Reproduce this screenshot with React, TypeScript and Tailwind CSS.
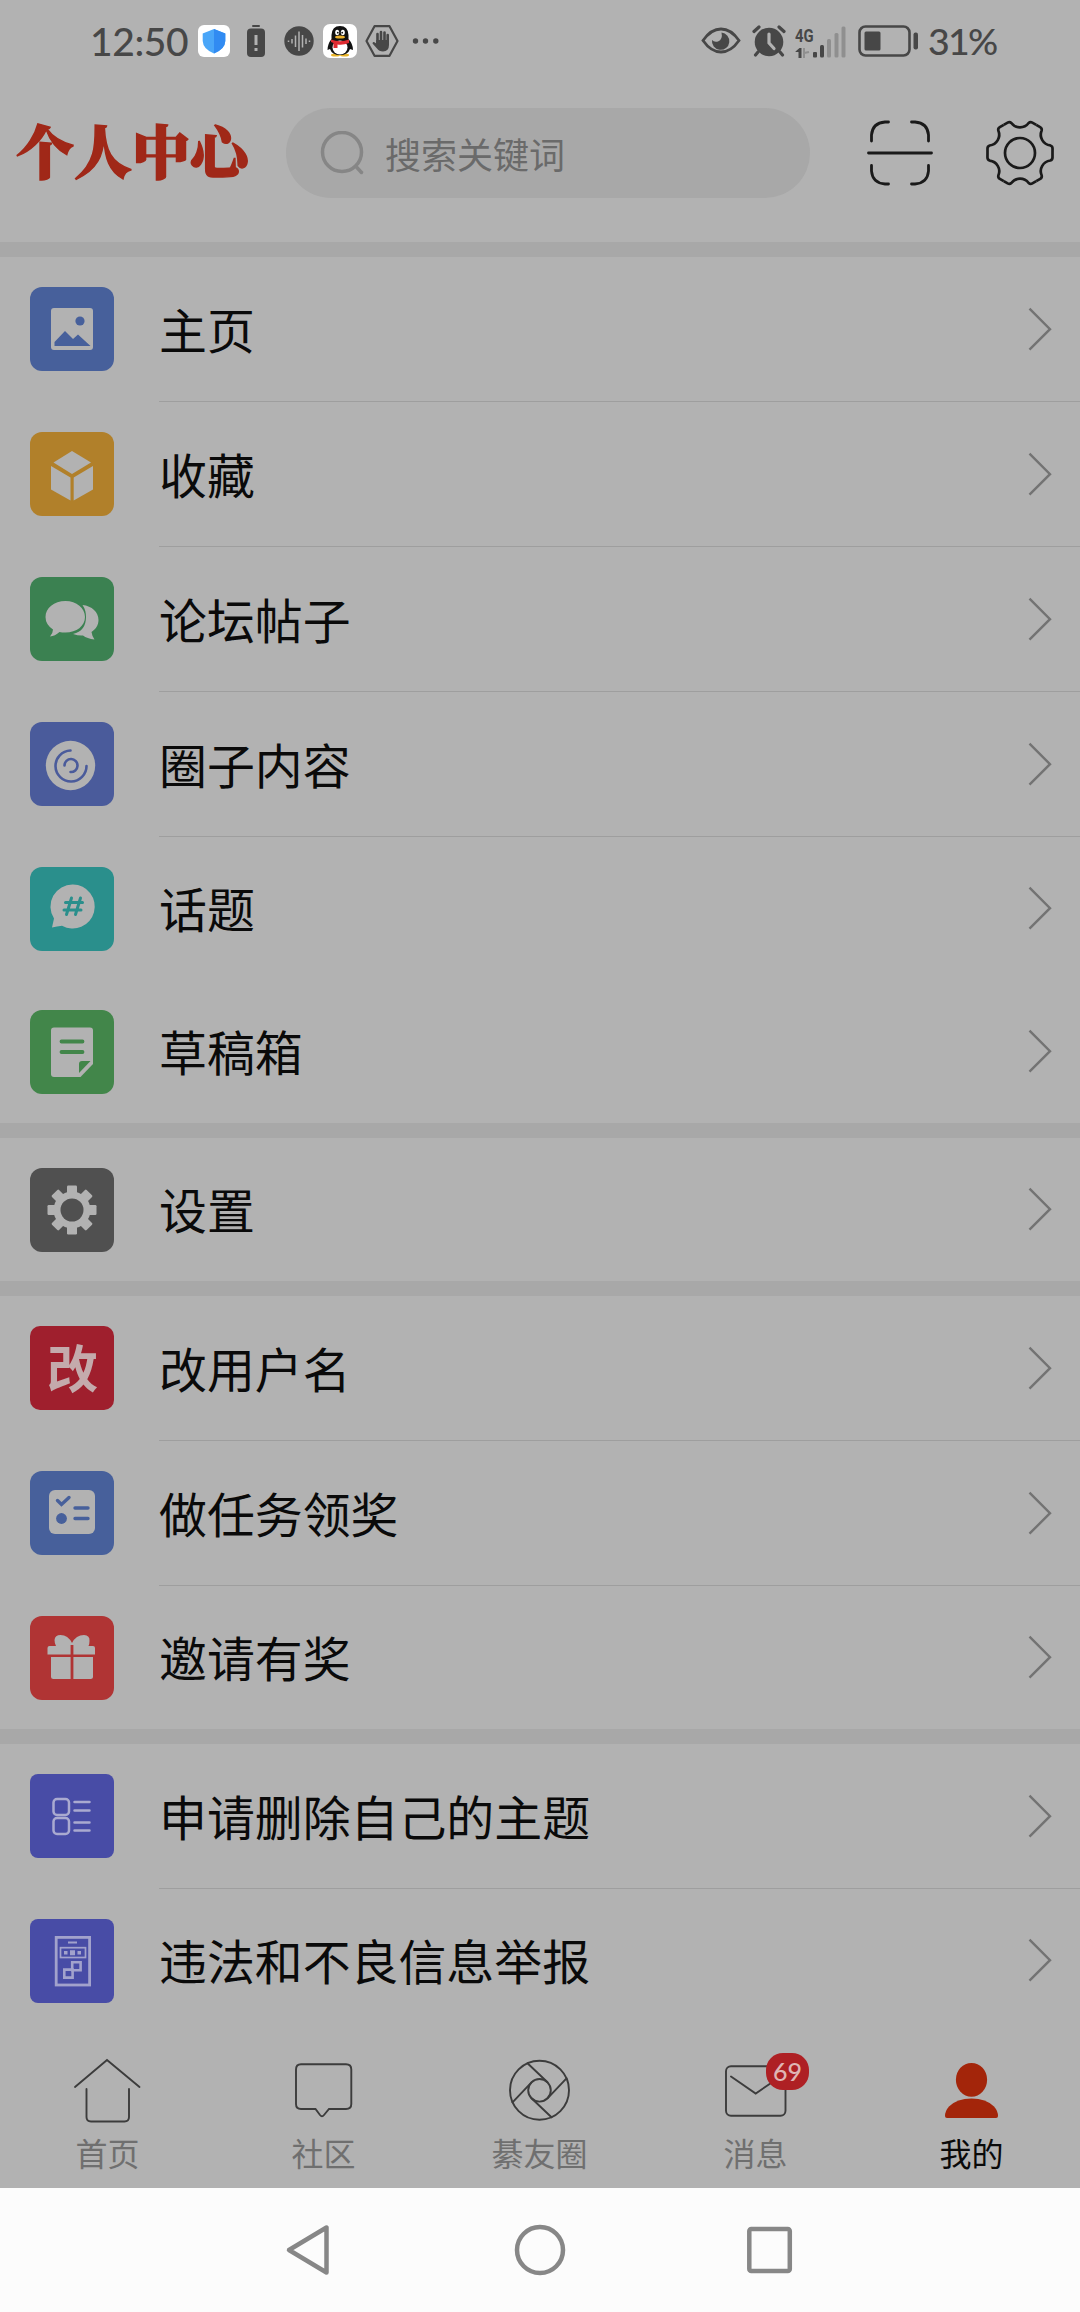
import type { ReactNode } from "react";
import { clsx } from "clsx";

interface MenuItem {
  label: string;
  color: string;
  icon: ReactNode;
  line?: boolean;
}

// Glyphs are drawn on an 84x84 tile
const groups: MenuItem[][] = [
  [
    {
      label: "主页",
      color: "bg-[#47609b] rounded-xl",
      line: true,
      icon: (
        <>
          <rect x="21" y="21" width="42" height="42" rx="3" fill="#b2b2b2" />
          <circle cx="50" cy="34" r="4.6" fill="#47609b" />
          <path d="M24.500 59V55L35 44L43 52L48 47.500L60.500 59Z" fill="#47609b" />
        </>
      ),
    },
    {
      label: "收藏",
      color: "bg-[#b1802a] rounded-xl",
      line: true,
      icon: (
        <g fill="#b2b2b2">
          <path d="M42 19L61 30.500L42 42L23.500 30.500Z" />
          <path d="M21 34L40.500 45.500V68.500L21 57.500Z" />
          <path d="M63 34L43.700 45.500V68.500L63 57.500Z" />
        </g>
      ),
    },
    {
      label: "论坛帖子",
      color: "bg-[#3b8151] rounded-xl",
      line: true,
      icon: (
        <g fill="#b2b2b2">
          <path d="M52.500 28C62 29 68.500 35 68.500 43C68.500 48 66 52 61.500 55Q62 59 64.500 62.500Q57 61.500 53 58.500Q49 59 43 57Q56 54 56 40Q56 33 52.500 28Z" />
          <path d="M35.500 24C46.500 24 55 31 55 40C55 49 46.500 55.500 35.500 55.500Q32 55.500 29.500 55Q25 59 20 59.500Q23 56 23 52.500Q15.500 47.500 15.500 40C15.500 31 24 24 35.500 24Z" />
        </g>
      ),
    },
    {
      label: "圈子内容",
      color: "bg-[#4a5b9b] rounded-xl",
      line: true,
      icon: (
        <>
          <circle cx="40.500" cy="43.500" r="24.700" fill="#b2b2b2" />
          <path
            d="M40.500 28.500A15.500 15.500 0 1 0 56.500 44M34.500 43.500A6.500 6.500 0 1 1 40.500 50"
            fill="none"
            stroke="#4a5b9b"
            strokeWidth="2.600"
            strokeLinecap="round"
          />
        </>
      ),
    },
    {
      label: "话题",
      color: "bg-[#2a8f8c] rounded-xl",
      icon: (
        <>
          <path
            d="M43 17.500A22 22 0 1 1 32 58.700Q27 59.500 22 60.500L24 51.500A22 22 0 0 1 43 17.500Z"
            fill="#b2b2b2"
          />
          <path
            d="M41.500 31L36.500 47.500M50.500 31L45.500 47.500M35.500 35.500H52.500M34 43H51"
            fill="none"
            stroke="#2a8f8c"
            strokeWidth="3"
            strokeLinecap="round"
          />
        </>
      ),
    },
    {
      label: "草稿箱",
      color: "bg-[#42864a] rounded-xl",
      icon: (
        <>
          <path
            d="M24 17.500H60Q63 17.500 63 20.500V54L50.500 67H24Q21 67 21 64V20.500Q21 17.500 24 17.500Z"
            fill="#b2b2b2"
          />
          <path d="M31.500 31.500H52.500M31.500 42H52.500" stroke="#42864a" strokeWidth="3.800" strokeLinecap="round" />
          <path d="M49 63V54Q49 51 52 51H60.500Z" fill="#42864a" />
        </>
      ),
    },
  ],
  [
    {
      label: "设置",
      color: "bg-[#505050] rounded-xl",
      icon: (
        <g transform="translate(42 42)">
          {[0, 45, 90, 135].map((a) => (
            <rect
              key={a}
              x="-5"
              y="-24.500"
              width="10"
              height="49"
              rx="1.200"
              fill="#b2b2b2"
              transform={`rotate(${a})`}
            />
          ))}
          <circle r="18.500" fill="#b2b2b2" />
          <circle r="11.500" fill="#505050" />
        </g>
      ),
    },
  ],
  [
    {
      label: "改用户名",
      color: "bg-[#9f1f2d] rounded-[10px]",
      line: true,
      icon: (
        <text x="42.500" y="62" textAnchor="middle" fontSize="51" fontWeight="700" fill="#c4aaac">
          改
        </text>
      ),
    },
    {
      label: "做任务领奖",
      color: "bg-[#47609b] rounded-xl",
      line: true,
      icon: (
        <>
          <rect x="19" y="19" width="46" height="44" rx="6" fill="#b2b2b2" />
          <path
            d="M27.500 29.500L31.500 33.500L39 26.500M45 37H58M45 47.500H58"
            fill="none"
            stroke="#47609b"
            strokeWidth="3.400"
            strokeLinecap="round"
          />
          <circle cx="31.500" cy="47.500" r="5.400" fill="#47609b" />
        </>
      ),
    },
    {
      label: "邀请有奖",
      color: "bg-[#b03434] rounded-xl",
      icon: (
        <g fill="#b2b2b2">
          <path d="M42 27Q46 19 54 19Q60 19.500 59.500 25Q59.500 28 58.500 30H63Q65 30 65 32V38.500H43.400V29H40.600V38.500H17.500V32Q17.500 30 19.500 30H26Q24.500 27 24.500 24Q25 19 30.500 19Q38 19 42 27Z" />
          <path d="M21 41H40.600V63H23.500Q21 63 21 60.500Z" />
          <path d="M43.400 41H63V60.500Q63 63 60.500 63H43.400Z" />
        </g>
      ),
    },
  ],
  [
    {
      label: "申请删除自己的主题",
      color: "bg-[#484ca6] rounded-lg",
      line: true,
      icon: (
        <g fill="none" stroke="#aaaad0" strokeWidth="2.500" strokeLinecap="round">
          <rect x="23.500" y="25" width="15.500" height="16" rx="3.500" />
          <rect x="23.500" y="44" width="15.500" height="16" rx="3.500" />
          <path d="M44.500 28H59.500M44.500 36.500H59.500M44.500 48.500H59.500M44.500 56.500H59.500" />
        </g>
      ),
    },
    {
      label: "违法和不良信息举报",
      color: "bg-[#484ca6] rounded-lg",
      icon: (
        <g fill="none" stroke="#a2a2cc" strokeWidth="2.800">
          <rect x="26.200" y="18.400" width="33.400" height="47.600" />
          <path d="M38 23.500H47" strokeWidth="2.200" />
          <rect x="30.500" y="28.700" width="25" height="9.800" strokeWidth="1.700" />
          <path d="M34 33.700H37.500M47.500 33.700H51" strokeWidth="3.500" />
          <path d="M40 33.700H45" strokeWidth="5" />
          <path d="M42.200 43.300H50.600V51.200H42.200ZM34.300 50.600H42.600V58.600H34.300Z" strokeWidth="2.600" />
        </g>
      ),
    },
  ],
];

function MenuRow({ item }: { item: MenuItem }) {
  return (
    <div className={clsx("flex", item.line ? "h-[145px]" : "h-[143px]")}>
      <div className={clsx("mt-[30px] ml-[30px] size-[84px] shrink-0 overflow-hidden", item.color)}>
        <svg viewBox="0 0 84 84" className="size-full">
          {item.icon}
        </svg>
      </div>
      <div
        className={clsx(
          "ml-[45px] flex flex-1 items-center justify-between pr-7 pb-[1px]",
          item.line && "border-b border-[#9e9e9e]"
        )}
      >
        <span className="-mt-[2px] text-[47.900px] leading-[60px] text-[#0a0a0a]">{item.label}</span>
        <svg viewBox="0 0 24 44" className="h-[44px] w-[24px]" fill="none" stroke="#737373" strokeWidth="2.400">
          <path d="M1.500 1.700L22 22.200L1.500 42.700" />
        </svg>
      </div>
    </div>
  );
}

function StatusBar() {
  return (
    <div className="flex h-20 items-center pt-[2px] text-[#474747]">
      <span className="ml-[90px] w-[100px] font-[Lato] text-[39px] leading-none font-medium tracking-[-0.4px]">
        12:50
      </span>
      <svg viewBox="0 0 32 32" className="ml-2 size-8">
        <rect width="32" height="32" rx="6" fill="#fff" />
        <path d="M16 4L27.300 8.500V16Q27 24 16 28.500Q5 24 4.700 16V8.500Z" fill="#4aa6f8" />
        <path d="M16 4L27.300 8.500V16Q27 24 16 28.500Z" fill="#318bf2" />
      </svg>
      <svg viewBox="0 0 18 32" className="ml-[17px] h-8 w-[18px]" fill="currentColor">
        <rect x="5" y="0" width="8" height="2" rx="1" />
        <rect x="0" y="3.500" width="18" height="28.500" rx="4" />
        <path d="M9 10V20M9 23V26" stroke="#b2b2b2" strokeWidth="3" />
      </svg>
      <svg viewBox="0 0 30 30" className="ml-[19px] size-[30px]">
        <circle cx="15" cy="15" r="14.700" fill="currentColor" />
        <path
          d="M4.500 14.500V16M8 13V17.500M11.500 9.500V21M15 5.500V25M18.500 9V21.500M22 12.500V18M25.500 14.500V16"
          stroke="#b2b2b2"
          strokeWidth="1.500"
        />
      </svg>
      <svg viewBox="0 0 34 34" className="ml-[9px] size-[34px]">
        <rect width="34" height="34" rx="7" fill="#fff" />
        <ellipse cx="12.500" cy="31" rx="4.500" ry="1.500" fill="#e8b428" />
        <ellipse cx="21.500" cy="31" rx="4.500" ry="1.500" fill="#e8b428" />
        <path
          d="M17 2Q25 2 25.500 11V15Q30 20 30 26L27 25Q25 31 17 31Q9 31 7 25L4.500 26Q4.500 20 8.500 15V11Q9 2 17 2Z"
          fill="#111"
        />
        <ellipse cx="17" cy="23.500" rx="7.500" ry="7" fill="#fff" />
        <path d="M8 15.500Q17 19 26 15.500V19Q20 21.500 14.500 20.500V24H10.500V19L8 18Z" fill="#dd2a30" />
        <ellipse cx="14.200" cy="8.500" rx="2" ry="2.800" fill="#fff" />
        <ellipse cx="19.800" cy="8.500" rx="2" ry="2.800" fill="#fff" />
        <circle cx="14.800" cy="8.700" r="0.900" fill="#111" />
        <circle cx="19.200" cy="8.700" r="0.900" fill="#111" />
        <ellipse cx="17" cy="13" rx="5" ry="1.600" fill="#efb32d" />
      </svg>
      <svg viewBox="0 0 34 32" className="ml-2 h-8 w-[34px]">
        <path
          d="M9.500 1.200H24.500L32.500 16L24.500 30.800H9.500L1.500 16Z"
          fill="none"
          stroke="currentColor"
          strokeWidth="2.200"
          strokeLinejoin="round"
        />
        <path d="M12.500 19V9M16 17V7M19.500 17V7.500M22.700 18V10" stroke="currentColor" strokeWidth="2.600" strokeLinecap="round" />
        <path
          d="M11.200 15H24V20Q24 26 18 26.500Q14 26.500 12 23.500L7.500 18.500Q8 16 10.500 18L11.200 18.500Z"
          fill="currentColor"
        />
      </svg>
      <svg viewBox="0 0 28 8" className="ml-[13px] h-2 w-7" fill="currentColor">
        <circle cx="3.500" cy="4" r="2.700" />
        <circle cx="13.500" cy="4" r="2.700" />
        <circle cx="23.800" cy="4" r="2.700" />
      </svg>

      <svg viewBox="0 0 40 28" className="mr-[11px] ml-auto h-7 w-10">
        <path
          d="M2 13.500Q10 2 20 2Q30 2 38 13.500Q30 25 20 25Q10 25 2 13.500Z"
          fill="none"
          stroke="currentColor"
          strokeWidth="2.800"
        />
        <path d="M20.500 5.500A8.700 8.700 0 1 1 11 13Q13 15.500 17 14.500Q22 12.500 20.500 5.500Z" fill="currentColor" />
      </svg>
      <svg viewBox="0 0 34 32" className="mr-[9px] h-8 w-[34px]">
        <circle cx="17" cy="17" r="14.300" fill="currentColor" />
        <path
          d="M2 6.500L7 2M32 6.500L27 2M6 27L3.500 30M28 27L30.500 30"
          stroke="currentColor"
          strokeWidth="3.200"
          strokeLinecap="round"
        />
        <path d="M17 9V18L22 23.500" fill="none" stroke="#b2b2b2" strokeWidth="3.200" strokeLinecap="round" />
      </svg>
      <div className="mr-3 flex h-[38px] items-end">
        <div className="flex w-[18px] flex-col">
          <span className="h-5 origin-left scale-x-[0.78] font-[Roboto] text-[19px] leading-5 font-bold">4G</span>
          <svg viewBox="0 0 18 14" className="h-[14px] w-[18px]" fill="currentColor">
            <path d="M0.500 5.500L4.500 2H6.500V12H3.500V6H0.500Z" />
            <path d="M9 2V12M9 7L14 6" stroke="#8f8f8f" strokeWidth="2" />
          </svg>
        </div>
        <svg viewBox="0 0 33 34" className="h-[34px] w-[33px]" fill="currentColor">
          <rect x="0" y="26" width="4" height="5.500" rx="1" />
          <rect x="7" y="19" width="4" height="12.500" rx="1.500" />
          <g fill="#8f8f8f">
            <rect x="14" y="13" width="4" height="18.500" rx="1.500" />
            <rect x="21.500" y="7" width="4" height="24.500" rx="1.500" />
            <rect x="28.500" y="0.500" width="4" height="31" rx="1.500" />
          </g>
        </svg>
      </div>
      <svg viewBox="0 0 61 32" className="mr-[9px] h-8 w-[61px]">
        <rect x="1.500" y="1.500" width="50" height="29" rx="6" fill="none" stroke="currentColor" strokeWidth="2.600" />
        <rect x="6.500" y="6.500" width="16" height="19" rx="1.500" fill="currentColor" />
        <rect x="55.500" y="7.500" width="4.500" height="17" rx="2" fill="currentColor" />
      </svg>
      <span className="mr-[82px] w-[70px] font-[Lato] text-[37.500px] leading-none font-medium tracking-[-1.700px] whitespace-nowrap">
        31%
      </span>
    </div>
  );
}

function Header() {
  return (
    <div className="flex h-[162px] items-start pt-7">
      <h1 className="mt-[9px] ml-4 w-[270px] font-['Noto_Serif_CJK_SC','Noto_Sans_CJK_SC',serif] text-[58px] leading-[64px] font-black whitespace-nowrap text-[#a02818] [-webkit-text-stroke:1.500px_#a02818]">
        个人中心
      </h1>
      <div className="flex h-[90px] w-[524px] items-center rounded-full bg-[#a8a8a8]">
        <svg viewBox="0 0 44 44" className="ml-[34px] size-11" fill="none" stroke="#868686" strokeWidth="3.500" strokeLinecap="round">
          <circle cx="22" cy="21" r="19.500" />
          <path d="M36 35.500L41.500 41.500" />
        </svg>
        <span className="ml-[21px] text-[36px] leading-none text-[#6a6a6a]">搜索关键词</span>
      </div>
      <svg viewBox="0 0 68 66" className="mt-[12px] ml-[56px] h-[66px] w-[68px]" fill="none" stroke="#1a1a1a" strokeWidth="2.800" strokeLinecap="round">
        <path d="M5.500 21V15Q6.500 3 19 2H22.500M45.500 2H49Q61.500 3 62.500 15V21M62.500 45.500V51Q61.500 63 49 64H45.500M22.500 64H19Q6.500 63 5.500 51V45.500M2.500 33H65.500" />
      </svg>
      <svg viewBox="-35 -34 70 68" className="mt-[11px] ml-[51px] h-[68px] w-[70px]" fill="none" stroke="#1a1a1a" strokeWidth="2.700">
        <circle r="15" />
        {[0, 60, 120, 180, 240, 300].map((a) => (
          <path
            key={a}
            d="M32.500 0V4.500Q32.500 6.800 30.300 7.500A10.800 10.800 0 0 0 21.700 22.500Q22.200 24.700 20.200 25.900L16.250 28.150"
            transform={`rotate(${a})`}
          />
        ))}
      </svg>
    </div>
  );
}

const tabs = [
  {
    label: "首页",
    icon: <path d="M3 35L35 8L67.500 35M14.500 37V65Q14.500 69.500 19 69.500H52.500Q57 69.500 57 65V37" />,
  },
  {
    label: "社区",
    icon: (
      <path d="M13 12.300H58Q63.300 12.300 63.300 17.500V52Q63.300 57 58 57H41L36 63Q34 65.500 32 63L27.500 57H13Q8 57 8 52V17.500Q8 12.300 13 12.300Z" />
    ),
  },
  {
    label: "綦友圈",
    icon: (
      <g transform="translate(35.500 38.300)">
        <circle r="29.500" />
        <circle r="11.300" />
        <path d="M-12 -27L8 -8M27 -12L8 8M12 27L-8 8M-27 12L-8 -8" />
      </g>
    ),
  },
  {
    label: "消息",
    badge: 69,
    icon: (
      <>
        <rect x="6" y="14.300" width="59.500" height="49.500" rx="5" />
        <path d="M11 24.500L35.700 41.500L60 25" />
      </>
    ),
  },
  {
    label: "我的",
    active: true,
    icon: (
      <g fill="#a3250a" stroke="none">
        <ellipse cx="35.500" cy="27.800" rx="15.600" ry="16.900" />
        <path d="M9 64Q9 59 13 54.500Q21 46.500 35.500 46.500Q50 46.500 58 54.500Q62 59 62 64Q62 66 60 66H11Q9 66 9 64Z" />
      </g>
    ),
  },
];

function TabBar() {
  return (
    <div className="grid h-[156px] grid-cols-5">
      {tabs.map((tab) => (
        <div key={tab.label} className="flex flex-col items-center pt-5">
          <div className="relative">
            <svg viewBox="0 0 72 72" className="size-[72px]" fill="none" stroke="#3c3c3c" strokeWidth="1.900" strokeLinecap="round">
              {tab.icon}
            </svg>
            {tab.badge && (
              <span className="absolute top-[1px] left-[46px] flex h-[37px] w-[43px] items-center justify-center rounded-[17px] bg-[#ae2024] font-[Lato] text-[25px] font-medium text-[#dfb5b5]">
                {tab.badge}
              </span>
            )}
          </div>
          <span
            className={clsx("mt-2 pr-[1px] text-[32px] leading-[40px]", tab.active ? "text-[#0a0a0a]" : "text-[#6f6f6f]")}
          >
            {tab.label}
          </span>
        </div>
      ))}
    </div>
  );
}

function SystemNav() {
  return (
    <div className="flex h-[124px] items-center justify-center gap-[180px] bg-[#fcfcfc]">
      <svg viewBox="0 0 50 54" className="h-[54px] w-[50px]" fill="none" stroke="#878787" strokeWidth="4.500" strokeLinejoin="round">
        <path d="M43.500 4.500V49.500L6 27Z" />
      </svg>
      <svg viewBox="0 0 54 54" className="size-[54px]" fill="none" stroke="#878787" strokeWidth="4.500">
        <circle cx="27" cy="27" r="23" />
      </svg>
      <svg viewBox="0 0 50 54" className="h-[54px] w-[50px]" fill="none" stroke="#878787" strokeWidth="4.500">
        <rect x="2.300" y="6" width="40.500" height="42" rx="2" />
      </svg>
    </div>
  );
}

export default function App() {
  return (
    <div className="h-[2312px] w-[1080px] overflow-hidden bg-[#b2b2b2] font-['Noto_Sans_CJK_SC',sans-serif]">
      <StatusBar />
      <Header />
      {groups.map((group) => (
        <div key={group[0].label} className="border-t-[15px] border-[#a8a8a8]">
          {group.map((item) => (
            <MenuRow key={item.label} item={item} />
          ))}
        </div>
      ))}
      <TabBar />
      <SystemNav />
    </div>
  );
}
